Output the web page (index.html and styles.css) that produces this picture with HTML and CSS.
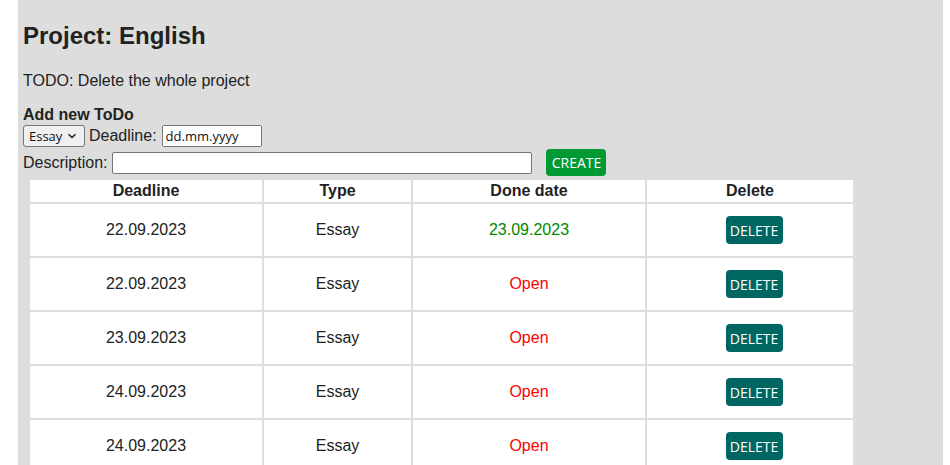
FILE: index.html
```html
<!DOCTYPE html>
<html lang="en">
<head>
<meta charset="utf-8">
<title>Project: English</title>
<link rel="stylesheet" href="styles.css">
</head>
<body>
<div class="page">
  <h2 class="title">Project: English</h2>
  <p class="todo">TODO: Delete the whole project</p>
  <form class="add-form">
    <div class="form-title">Add new ToDo</div>
    <div class="form-row">
      <select class="select"><option>Essay</option></select>
      <label>Deadline:</label>
      <input class="input date" type="text" value="dd.mm.yyyy">
    </div>
    <div class="form-row row2">
      <label>Description:</label>
      <input class="input desc" type="text">
      <button type="button" class="btn create">CREATE</button>
    </div>
  </form>
  <table class="todos">
    <thead>
      <tr><th class="c1">Deadline</th><th class="c2">Type</th><th class="c3">Done date</th><th class="c4">Delete</th></tr>
    </thead>
    <tbody>
      <tr><td>22.09.2023</td><td>Essay</td><td class="done">23.09.2023</td><td><button type="button" class="btn delete">DELETE</button></td></tr>
      <tr><td>22.09.2023</td><td>Essay</td><td class="open">Open</td><td><button type="button" class="btn delete">DELETE</button></td></tr>
      <tr><td>23.09.2023</td><td>Essay</td><td class="open">Open</td><td><button type="button" class="btn delete">DELETE</button></td></tr>
      <tr><td>24.09.2023</td><td>Essay</td><td class="open">Open</td><td><button type="button" class="btn delete">DELETE</button></td></tr>
      <tr><td>24.09.2023</td><td>Essay</td><td class="open">Open</td><td><button type="button" class="btn delete">DELETE</button></td></tr>
    </tbody>
  </table>
</div>
</body>
</html>
```

FILE: styles.css
```css
html, body {
  margin: 0;
  padding: 0;
  background: #ffffff;
}
body {
  font-family: "Liberation Sans", Arial, sans-serif;
  font-size: 16px;
  color: #222222;
}
.page {
  margin-left: 18px;
  width: 925px;
  box-sizing: border-box;
  padding: 22px 5px 20px;
  background: #dddddd;
  min-height: 465px;
}
.title {
  margin: 0 0 22px;
  font-size: 24px;
  font-weight: bold;
}
.todo {
  margin: 0 0 16px;
}
.add-form {
  margin: 0;
}
.form-title {
  font-weight: bold;
}
.form-row {
  display: flex;
  align-items: center;
  gap: 4px;
  margin-top: 1px;
}
.form-row label {
  margin-right: 1px;
}
.row2 {
  margin-top: 2px;
}
.select {
  appearance: none;
  -webkit-appearance: none;
  width: 62px;
  height: 22px;
  box-sizing: border-box;
  border: 1px solid #767676;
  border-radius: 3px;
  background-color: #efeff2;
  background-image: url("data:image/svg+xml;utf8,<svg xmlns='http://www.w3.org/2000/svg' width='10' height='6' viewBox='0 0 10 6'><path d='M1.5 1.2 L5 4.6 L8.5 1.2' fill='none' stroke='%23222' stroke-width='1.4'/></svg>");
  background-repeat: no-repeat;
  background-position: right 7px center;
  font-family: "Open Sans", sans-serif;
  font-size: 13px;
  color: #111;
  padding: 0 0 0 5px;
}
.input {
  height: 22px;
  box-sizing: border-box;
  border: 1px solid #767676;
  border-radius: 2px;
  background: #ffffff;
  font-family: "Open Sans", sans-serif;
  font-size: 13px;
  color: #111;
  padding: 0 3px;
  margin: 0;
}
.date {
  width: 100px;
}
.desc {
  width: 420px;
}
.btn {
  height: 28px;
  border: none;
  border-radius: 4px;
  color: #ffffff;
  font-family: "Open Sans", sans-serif;
  font-size: 14px;
  padding: 0;
  cursor: pointer;
}
.create {
  background: #009933;
  margin-left: 10px;
  height: 27px;
  width: 60px;
}
.delete {
  background: #006661;
  width: 57px;
  margin-left: 8px;
}
.todos {
  margin: 2px 0 0 5px;
  border-spacing: 2px;
}
.todos th, .todos td {
  background: #ffffff;
  text-align: center;
  padding: 0;
}
.todos th {
  height: 22px;
  font-weight: bold;
}
.todos td {
  height: 52px;
}
.c1 { width: 232px; }
.c2 { width: 147px; }
.c3 { width: 232px; }
.c4 { width: 206px; }
.done { color: #008800; }
.open { color: #ff0000; }
```
